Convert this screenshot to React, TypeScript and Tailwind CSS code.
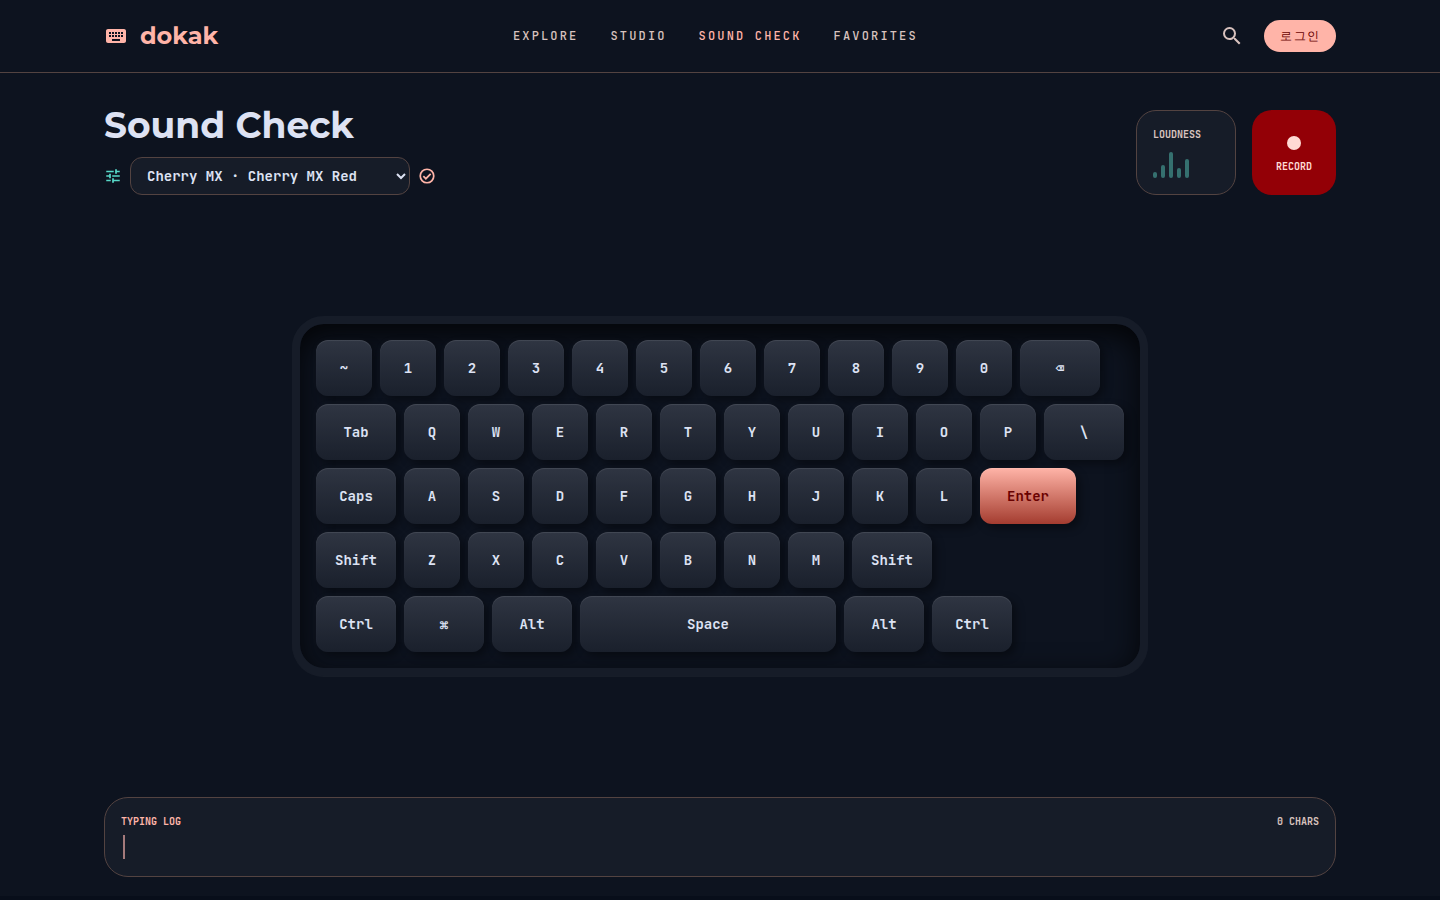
import { useState } from "react";
import { MdKeyboard, MdSearch } from "react-icons/md";

const NAV = [
  { label: "Explore", active: false },
  { label: "Studio", active: false },
  { label: "Sound Check", active: true },
  { label: "Favorites", active: false },
];

const ROWS = [
  ["~", "1", "2", "3", "4", "5", "6", "7", "8", "9", "0", "⌫"],
  ["Tab", "Q", "W", "E", "R", "T", "Y", "U", "I", "O", "P", "\\"],
  ["Caps", "A", "S", "D", "F", "G", "H", "J", "K", "L", "Enter"],
  ["Shift", "Z", "X", "C", "V", "B", "N", "M", "Shift"],
  ["Ctrl", "⌘", "Alt", "Space", "Alt", "Ctrl"],
];

const WIDE_KEYS = ["⌫", "\\", "Tab", "Caps", "Shift", "Ctrl", "⌘", "Alt"];

const BARS = ["h-[6px]", "h-[13px]", "h-[26px]", "h-[10px]", "h-[19px]"];

const MONO = "font-['JetBrains_Mono',monospace]";
const DISPLAY = "font-['Montserrat','Inter',sans-serif]";

function keyWidth(label: string) {
  if (label === "Space") return "w-64";
  if (label === "Enter") return "w-24";
  return WIDE_KEYS.includes(label) ? "w-20" : "w-14";
}

function Key({ label, onPress }: { label: string; onPress: (label: string) => void }) {
  const tone =
    label === "Enter"
      ? "bg-linear-to-b from-[#ffb4a8] to-[#a43c30] text-[#690100]"
      : "bg-linear-to-b from-[#2f3542] to-[#1a202c] text-[#dde2f3]";
  return (
    <button
      type="button"
      onClick={() => onPress(label)}
      className={`flex h-14 shrink-0 items-center justify-center rounded-xl text-sm font-semibold shadow-[4px_4px_8px_rgba(0,0,0,0.4),-2px_-2px_6px_rgba(255,255,255,0.02),inset_0_1px_1px_rgba(255,255,255,0.1)] ${keyWidth(label)} ${tone}`}
    >
      {label}
    </button>
  );
}

function TuneIcon() {
  return (
    <svg viewBox="0 0 24 24" fill="none" stroke="currentColor" strokeWidth="2.3" className="size-[18px] text-[#57d8c8]">
      <path d="M3 6h10M16 3v6M16 6h5M3 12h5M8 9v6M11 12h10M3 18h6M12 15v6M12 18h9" />
    </svg>
  );
}

function CheckBadge() {
  return (
    <svg viewBox="0 0 24 24" fill="none" stroke="currentColor" strokeWidth="2.3" className="size-[18px] text-[#ffb4a8]">
      <circle cx="12" cy="12" r="9" />
      <path d="M7.1 12.2l3.4 3.4 6.4-6.4" />
    </svg>
  );
}

function Header() {
  return (
    <header className="border-b border-[#534341] bg-[#0d131f]">
      <div className="mx-auto flex h-18 max-w-[1280px] items-center justify-between px-6">
        <a href="#" className="flex items-center gap-3 text-[#ffb4a8]">
          <MdKeyboard className="size-6" />
          <span className={`text-2xl font-bold ${DISPLAY}`}>dokak</span>
        </a>
        <nav className="flex gap-8 text-xs font-medium tracking-[0.18em] uppercase">
          {NAV.map((item) => (
            <a key={item.label} href="#" className={item.active ? "text-[#ffb4a8]" : "text-[#d8c2be]"}>
              {item.label}
            </a>
          ))}
        </nav>
        <div className="flex items-center gap-3">
          <button type="button" aria-label="Search" className="p-2 text-[#d8c2be]">
            <MdSearch className="size-6" />
          </button>
          <button
            type="button"
            className="h-8 rounded-full bg-[#ffb4a8] px-4 text-xs tracking-widest text-[#690100]"
          >
            로그인
          </button>
        </div>
      </div>
    </header>
  );
}

export default function App() {
  const [log, setLog] = useState("");

  return (
    <div className={`flex min-h-screen flex-col border-b-4 border-[#080e1a] bg-[#0d131f] text-[#dde2f3] ${MONO}`}>
      <Header />

      <main className="mx-auto flex w-full max-w-[1280px] flex-1 flex-col px-6 pt-8 pb-[19px]">
        <section className="flex items-end justify-between">
          <div className="flex flex-col gap-3">
            <h1 className={`text-4xl font-bold ${DISPLAY}`}>Sound Check</h1>
            <div className="flex items-center gap-2">
              <TuneIcon />
              <select
                aria-label="Switch"
                className="h-[38px] w-[280px] rounded-xl border border-[#534341] bg-[#161c28] pl-3 text-sm font-semibold"
              >
                <option>Cherry MX · Cherry MX Red</option>
              </select>
              <CheckBadge />
            </div>
          </div>

          <div className="flex gap-4 text-[10px] leading-4 font-semibold">
            <div className="flex h-[85px] w-[100px] flex-col justify-between rounded-[20px] border border-[#534341] bg-[#161c28] p-4">
              <span className="text-[#d8c2be]">LOUDNESS</span>
              <div className="flex items-end gap-1">
                {BARS.map((height) => (
                  <div key={height} className={`w-1 rounded-full bg-[#35706f] ${height}`} />
                ))}
              </div>
            </div>
            <button
              type="button"
              className="flex h-[85px] w-[84px] flex-col items-center justify-center gap-1 rounded-[20px] bg-[#930006] text-[#ffdad4]"
            >
              <span className="flex size-6 items-center justify-center">
                <span className="size-3.5 rounded-full bg-[#ffdad4]" />
              </span>
              RECORD
            </button>
          </div>
        </section>

        <section className="flex flex-1 items-center justify-center">
          <div className="flex w-[856px] flex-col gap-2 rounded-[32px] border-8 border-[#161c28] bg-[#0d131f] p-4 shadow-[inset_0_10px_30px_rgba(0,0,0,0.8),0_1px_1px_rgba(255,255,255,0.05)]">
            {ROWS.map((row, r) => (
              <div key={r} className="flex gap-2">
                {row.map((label, i) => (
                  <Key key={i} label={label} onPress={(pressed) => setLog(log + pressed)} />
                ))}
              </div>
            ))}
          </div>
        </section>

        <section className="h-20 rounded-3xl border border-[#534341] bg-[#161c28] p-4">
          <div className="flex justify-between text-[10px] leading-4 font-semibold">
            <span className="text-[#ffb4a8]">TYPING LOG</span>
            <span className="text-[#d8c2be]">{log.length} CHARS</span>
          </div>
          <div className="mt-[5px] flex h-6 items-center text-base">
            {log}
            <span className="ml-0.5 h-6 w-0.5 bg-[#a47a7b]" />
          </div>
        </section>
      </main>
    </div>
  );
}
